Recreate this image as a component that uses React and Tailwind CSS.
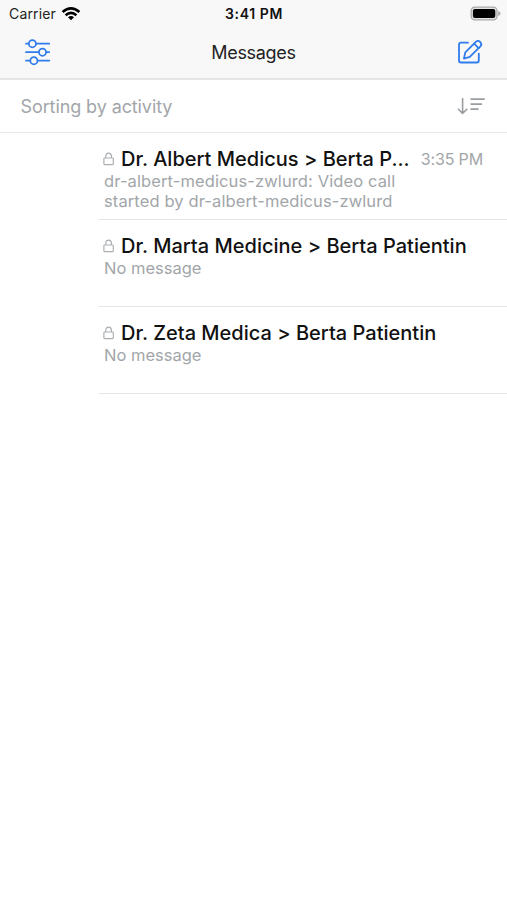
function Wifi() {
  return (
    <svg className="ml-[5px] h-[14px] w-[20px]" viewBox="0 0 20 14" fill="none" stroke="#000" strokeWidth="2.6">
      <path d="M1.6 5.1 Q10 -2.3 18.4 5.1" />
      <path d="M4.6 8.2 Q10 3.4 15.4 8.2" />
      <path d="M10 13.2 L7 10.2 Q10 7.8 13 10.2 Z" fill="#000" stroke="none" />
    </svg>
  );
}

function Battery() {
  return (
    <svg className="h-[16px] w-[32px]" viewBox="0 0 32 16">
      <rect x="1.2" y="1.1" width="25.8" height="12.8" rx="3.6" fill="#e4e4e4" stroke="#a9a9a9" strokeWidth="1.3" />
      <rect x="2.9" y="2.9" width="22.4" height="9.2" rx="2" fill="#000" />
      <path d="M28.2 5.1 Q30.5 5.9 30.5 7.5 Q30.5 9.1 28.2 9.9 Z" fill="#a9a9a9" />
    </svg>
  );
}

function Sliders() {
  return (
    <svg className="h-[28px] w-[28px]" viewBox="0 0 28 28" fill="none" stroke="#2f7cec" strokeWidth="1.7" strokeLinecap="round">
      <path d="M3 5.7H5.6M13 5.7H26.2M3 14.2H15.8M23.2 14.2H26.2M3 22.7H7.2M14.6 22.7H26.2" />
      <circle cx="9.4" cy="5.7" r="3.6" />
      <circle cx="19.5" cy="14.2" r="3.6" />
      <circle cx="10.9" cy="22.7" r="3.6" />
    </svg>
  );
}

function Compose() {
  return (
    <svg className="h-[28px] w-[28px]" viewBox="0 0 28 28" fill="none" stroke="#2f7cec" strokeWidth="1.8" strokeLinecap="round" strokeLinejoin="round">
      <path d="M12 4.7H5Q3 4.7 3 6.7V22.5Q3 24.5 5 24.5H20.8Q22.8 24.5 22.8 22.5V15.6" />
      <path d="M7.9 20.6L9.3 14.4L19.8 3.8Q22 1.8 24.2 4Q26.4 6.3 24.4 8.4L13.8 18.9Z" />
      <path d="M18.1 5.6L22.6 10.1" />
    </svg>
  );
}

function SortIcon() {
  return (
    <svg className="h-[20px] w-[30px]" viewBox="0 0 30 20" fill="none" stroke="#9a9ea1" strokeWidth="1.6" strokeLinecap="round" strokeLinejoin="round">
      <path d="M6.6 2.5V17M2.4 13.2L6.6 17.4L10.8 13.2M15 3.1H28.3M15 8.1H25.5M15 13.1H22" />
    </svg>
  );
}

function Lock() {
  return (
    <svg className="mr-[6px] h-[14px] w-[12px] shrink-0" viewBox="0 0 12 14" fill="none" stroke="#acafb1" strokeWidth="1.2" strokeLinejoin="round">
      <rect x="0.9" y="6" width="9.4" height="6.6" rx="0.8" />
      <path d="M2.8 6V4.4Q2.8 1.2 5.6 1.2Q8.4 1.2 8.4 4.4V6" />
    </svg>
  );
}

function Chat({ title, time, lines }) {
  return (
    <li className="ml-[99px] h-[87px] border-b border-[#e3e4e5] pt-[14px] pl-[4px]">
      <div className="flex h-[24px] items-center pr-[24px]">
        <Lock />
        <h2 className="whitespace-nowrap text-[20px] leading-6 font-medium tracking-[0.01px] text-[#111]">{title}</h2>
        {time && <time className="ml-auto whitespace-nowrap text-[16px] leading-6 tracking-[-0.15px] text-[#a2a6a9]">{time}</time>}
      </div>
      {lines.map((line) => (
        <p key={line} className={`pl-px text-[16.5px] leading-[20px] whitespace-nowrap text-[#a2a6a9] ${time ? "tracking-[0.11px]" : ""}`}>{line}</p>
      ))}
    </li>
  );
}

export default function App() {
  return (
    <main className="h-[900px] w-[507px] overflow-hidden bg-white font-['Inter',sans-serif]">
      <header className="h-[80px] border-b-2 border-[#e5e5e5] bg-[#f8f8f8]">
        <div className="grid h-[27px] grid-cols-3 items-center text-[14px] leading-[27px]">
          <div className="flex items-center pl-[9px] tracking-[0.15px] text-[#222]"><span>Carrier</span><Wifi /></div>
          <div className="pl-[1px] text-center font-semibold tracking-[0.6px] text-[#111]">3:41 PM</div>
          <div className="flex justify-end pr-[5px]"><Battery /></div>
        </div>
        <div className="flex h-[50px] items-center justify-between pr-[23px] pl-[23px]">
          <Sliders />
          <h1 className="pt-[2px] text-[18px] leading-6 tracking-[-0.3px] text-[#222]">Messages</h1>
          <Compose />
        </div>
      </header>
      <div className="flex h-[53px] items-center justify-between border-b border-[#e7e8e8] pr-[21px] pl-[20.5px]">
        <span className="pt-[2px] text-[18px] leading-6 tracking-[-0.1px] text-[#a2a6a9]">Sorting by activity</span>
        <SortIcon />
      </div>
      <ul>
        <Chat title="Dr. Albert Medicus > Berta P..." time="3:35 PM" lines={["dr-albert-medicus-zwlurd: Video call", "started by dr-albert-medicus-zwlurd"]} />
        <Chat title="Dr. Marta Medicine > Berta Patientin" lines={["No message"]} />
        <Chat title="Dr. Zeta Medica > Berta Patientin" lines={["No message"]} />
      </ul>
    </main>
  );
}
